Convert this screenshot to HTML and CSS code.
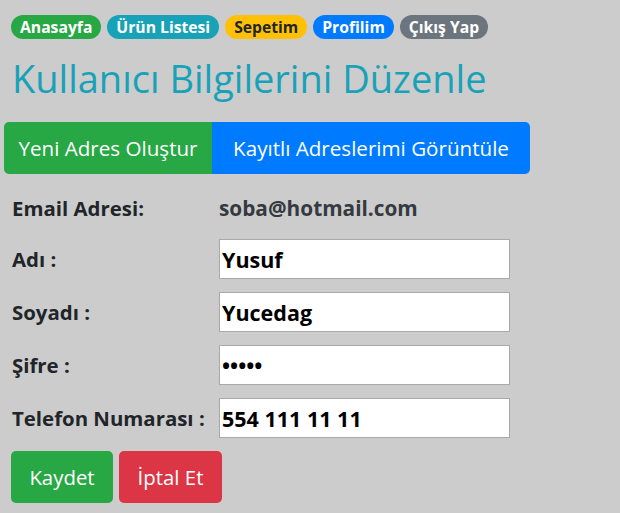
FILE: index.html
```html
<!DOCTYPE html>
<html lang="tr">
<head>
<meta charset="utf-8">
<title>Kullanıcı Bilgilerini Düzenle</title>
<link rel="stylesheet" href="styles.css">
</head>
<body>
<nav class="badges">
  <a class="badge badge-success">Anasayfa</a>
  <a class="badge badge-info">Ürün Listesi</a>
  <a class="badge badge-warning">Sepetim</a>
  <a class="badge badge-primary">Profilim</a>
  <a class="badge badge-secondary">Çıkış Yap</a>
</nav>
<h1 class="title">Kullanıcı Bilgilerini Düzenle</h1>
<div class="btn-group">
  <button class="btn btn-lg btn-success">Yeni Adres Oluştur</button>
  <button class="btn btn-lg btn-primary">Kayıtlı Adreslerimi Görüntüle</button>
</div>
<form class="form">
  <div class="row row-static">
    <label class="label">Email Adresi:</label>
    <span class="value">soba@hotmail.com</span>
  </div>
  <div class="row">
    <label class="label">Adı :</label>
    <input class="input" type="text" value="Yusuf">
  </div>
  <div class="row">
    <label class="label">Soyadı :</label>
    <input class="input" type="text" value="Yucedag">
  </div>
  <div class="row">
    <label class="label">Şifre :</label>
    <input class="input" type="password" value="12345">
  </div>
  <div class="row">
    <label class="label">Telefon Numarası :</label>
    <input class="input" type="text" value="554 111 11 11">
  </div>
  <div class="actions">
    <button type="button" class="btn btn-md btn-success">Kaydet</button>
    <button type="button" class="btn btn-md btn-danger">İptal Et</button>
  </div>
</form>
</body>
</html>
```
FILE: styles.css
```css
* { box-sizing: border-box; }
html, body { margin: 0; }
body {
  background: #cccccc;
  font-family: "Open Sans", "Noto Sans", sans-serif;
  color: #212529;
  padding: 0 4px;
}
.badges {
  display: flex;
  gap: 6px;
  padding: 15px 0 0 7px;
}
.badge {
  display: inline-flex;
  align-items: center;
  height: 24px;
  padding: 0 9px;
  border-radius: 12px;
  font-weight: 700;
  font-size: 15.7px;
  color: #fff;
}
.badge-success { background: #28a745; }
.badge-info { background: #17a2b8; }
.badge-warning { background: #ffc107; color: #212529; }
.badge-primary { background: #007bff; }
.badge-secondary { background: #6c757d; }
.title {
  margin: 14px 0 0 8px;
  font-size: 38px;
  font-weight: 400;
  line-height: 50px;
  color: #17a2b8;
}
.btn-group {
  display: inline-flex;
  margin-top: 19px;
  border-radius: 5px;
  overflow: hidden;
}
.btn {
  border: 0;
  font-family: inherit;
  color: #fff;
  cursor: pointer;
  white-space: nowrap;
  padding: 0;
  text-align: center;
}
.btn-lg {
  height: 52px;
  font-size: 20.6px;
}
.btn-lg.btn-success { width: 208px; }
.btn-lg.btn-primary { width: 318px; }
.btn-success { background: #28a745; }
.btn-primary { background: #007bff; }
.btn-danger { background: #dc3545; }
.form {
  display: flex;
  flex-direction: column;
  gap: 13px;
  padding: 20px 0 0 8px;
}
.row {
  display: grid;
  grid-template-columns: 207px 291px;
  align-items: center;
}
.row-static { height: 36px; margin-top: -4px; margin-bottom: 0; }
.label {
  font-weight: 700;
  font-size: 20.4px;
}
.value {
  font-weight: 700;
  font-size: 20.8px;
  color: #343a40;
}
.input {
  height: 40px;
  border: 1px solid #a9a9a9;
  background: #fff;
  padding: 0 2px;
  font-family: inherit;
  font-weight: 700;
  font-size: 21.5px;
  color: #000;
}
.actions {
  display: flex;
  gap: 6px;
  margin-left: -1px;
}
.btn-md {
  height: 52px;
  font-size: 20.4px;
  border-radius: 5px;
}
.btn-md.btn-success { width: 102px; }
.btn-md.btn-danger { width: 103px; }
```
